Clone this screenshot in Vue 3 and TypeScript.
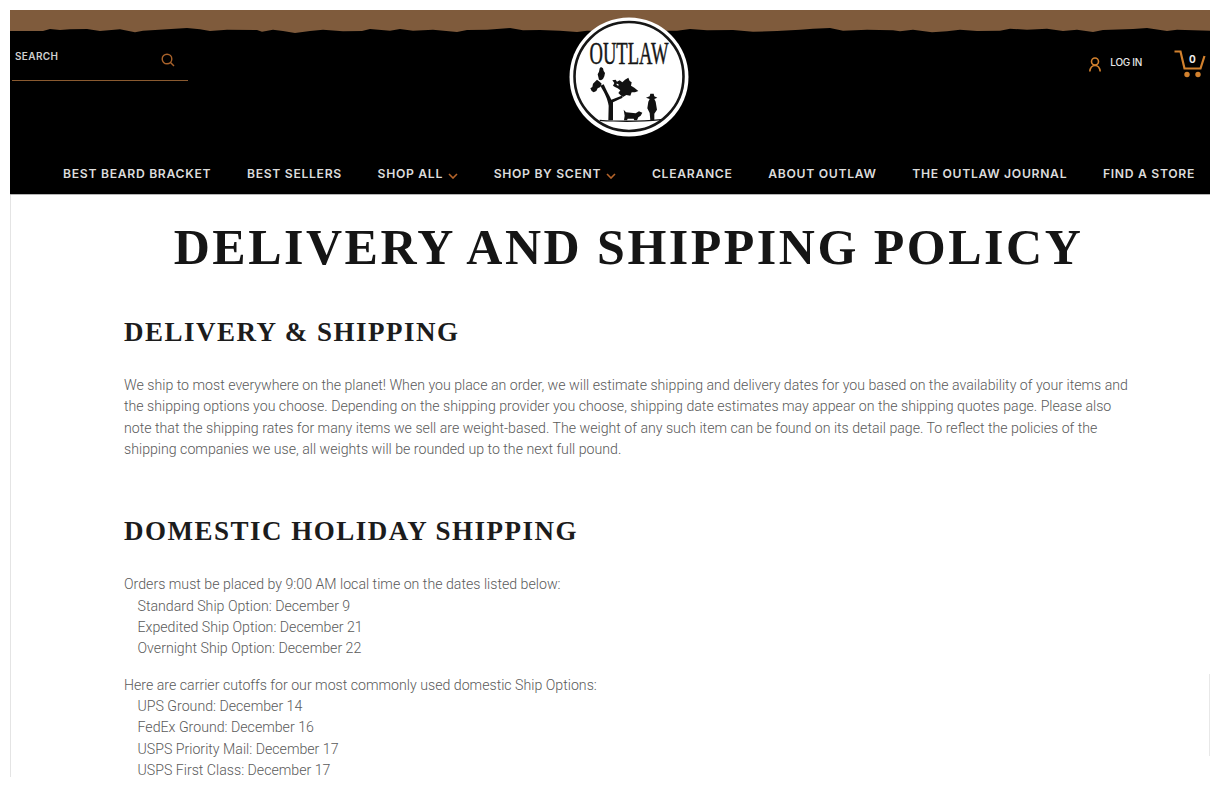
<script setup lang="ts">
const navItems = [
  { label: 'BEST BEARD BRACKET', caret: false },
  { label: 'BEST SELLERS', caret: false },
  { label: 'SHOP ALL', caret: true },
  { label: 'SHOP BY SCENT', caret: true },
  { label: 'CLEARANCE', caret: false },
  { label: 'ABOUT OUTLAW', caret: false },
  { label: 'THE OUTLAW JOURNAL', caret: false },
  { label: 'FIND A STORE', caret: false },
]

const domesticOptions = [
  'Standard Ship Option: December 9',
  'Expedited Ship Option: December 21',
  'Overnight Ship Option: December 22',
]

const carrierCutoffs = [
  'UPS Ground: December 14',
  'FedEx Ground: December 16',
  'USPS Priority Mail: December 17',
  'USPS First Class: December 17',
]

// rough trace of the ripped paper edge: [x, y] in header pixels
const edge: [number, number][] = [
  [0, 21], [33, 21], [40, 19], [50, 20], [60, 19.300], [77, 19], [90, 21], [110, 19.300], [125, 22.300], [133, 20.700],
  [157, 19.300], [177, 18], [190, 19.300], [200, 21], [217, 19.700], [247, 20], [252, 21.700], [263, 19.700], [273, 21],
  [285, 23], [300, 21], [313, 19.700], [333, 21.300], [352, 21], [360, 19], [380, 20.700], [390, 19],
  [403, 20.700], [423, 19.700], [447, 22], [457, 20], [477, 19.700], [500, 18], [513, 20.300], [530, 20], [550, 20.700],
  [567, 22], [577, 20.700], [667, 20.700], [680, 19], [697, 20.300], [723, 20], [743, 21.700], [767, 21], [790, 19.700],
  [803, 18.700], [820, 18], [833, 20.700], [857, 19.700], [883, 20.300], [890, 21.300], [903, 19.700], [922, 22.300],
  [937, 21.300], [950, 19.700], [967, 21], [990, 20.700], [1000, 18.700], [1017, 19.700], [1037, 18.700], [1053, 21],
  [1067, 19.700], [1083, 22], [1093, 20], [1123, 19], [1137, 18], [1157, 21], [1167, 19.700], [1200, 20.700],
]
const tornPath = `M0 0H1200V${edge[edge.length - 1][1]}` +
  [...edge].reverse().map(([x, y]) => `L${x} ${y}`).join('') + 'Z'
</script>

<template>
  <div class="page">
    <header class="site-header">
      <svg class="torn" viewBox="0 0 1200 24" preserveAspectRatio="none">
        <path :d="tornPath" fill="#7f5b3c" />
      </svg>

      <div class="top-row">
        <div class="search">
          <span class="search-label">SEARCH</span>
          <svg class="search-icon" viewBox="0 0 14 14">
            <circle cx="6" cy="6" r="4.800" />
            <path d="M9.500 9.500l3.500 3.500" />
          </svg>
        </div>

        <div class="account">
          <svg class="user-icon" viewBox="0 0 12 15">
            <circle cx="6" cy="4.500" r="3.500" />
            <path d="M.8 14.500c.4-3.600 2.200-6 5.200-6s4.800 2.400 5.200 6" />
          </svg>
          <span class="login">LOG IN</span>
          <div class="cart">
            <svg viewBox="0 0 32 28">
              <path class="cart-line" d="M.5 1.500H6.500L10.500 18.500H26.500L30.500 6" />
              <circle cx="13" cy="24.500" r="2.700" />
              <circle cx="24" cy="24.500" r="2.700" />
            </svg>
            <span class="cart-count">0</span>
          </div>
        </div>
      </div>

      <nav class="main-nav">
        <a v-for="item in navItems" :key="item.label" class="nav-link">
          {{ item.label }}
          <svg v-if="item.caret" class="caret" viewBox="0 0 10 6">
            <path d="M1 1l4 4 4-4" />
          </svg>
        </a>
      </nav>

      <div class="logo">
        <svg viewBox="0 0 120 120">
          <circle cx="60" cy="60" r="59.500" fill="#fff" />
          <circle cx="60" cy="59.500" r="54.500" fill="none" stroke="#161616" stroke-width="2.600" />
          <text transform="translate(60 47) scale(.58 1)" text-anchor="middle" class="logo-text">OUTLAW</text>
          <g transform="translate(16 48) scale(.3333)" fill="#111">
            <!-- tree -->
            <path d="M70 166L71 122C68 102 60 86 46 62L56 58C64 76 72 90 79 104L110 92 113 98 84 112 84 166Z" />
            <path d="M48 6L54 10 56 18 60 24 58 34 54 42 48 46 42 44 40 36 38 28 42 20 44 10Z" />
            <path d="M36 44L44 50 50 56 46 66 38 70 34 78 26 82 20 78 16 70 22 66 24 56 30 50Z" />
            <path d="M82 46L92 44 96 50 104 46 112 52 120 44 130 38 134 48 140 52 138 62 148 68 160 78 150 82 140 82 136 92 124 90 114 96 106 90 100 84 106 76 98 70 90 66 84 62 88 54Z" />
            <path d="M94 56L100 57 101 62 96 61Z" fill="#fff" />
            <!-- dog -->
            <path d="M116 134L123 142 152 145 162 139 172 143 167 152 160 157 156 166 148 166 146 161 128 161 126 166 117 166 119 152Z" />
            <!-- person -->
            <path d="M183 98L194 94 196 86 206 86 208 94 217 98 208 102 212 110 216 134 208 146 208 166 196 166 194 144 187 130 190 110 194 102Z" />
            <!-- ground -->
            <path d="M44 164C100 168 170 168 228 162L228 166C170 172 100 172 44 168Z" />
          </g>
        </svg>
      </div>
    </header>

    <main class="content">
      <h1 class="page-title">DELIVERY AND SHIPPING POLICY</h1>
      <div class="policy">
        <h2>DELIVERY &amp; SHIPPING</h2>
        <p class="intro">
          We ship to most everywhere on the planet! When you place an order, we will estimate shipping and delivery dates for you based on the availability of your items and the shipping options you choose. Depending on the shipping provider you choose, shipping date estimates may appear on the shipping quotes page. Please also note that the shipping rates for many items we sell are weight-based. The weight of any such item can be found on its detail page. To reflect the policies of the shipping companies we use, all weights will be rounded up to the next full pound.
        </p>
        <h2 class="second">DOMESTIC HOLIDAY SHIPPING</h2>
        <p class="lead">Orders must be placed by 9:00 AM local time on the dates listed below:</p>
        <ul>
          <li v-for="line in domesticOptions" :key="line">{{ line }}</li>
        </ul>
        <p class="next">Here are carrier cutoffs for our most commonly used domestic Ship Options:</p>
        <ul>
          <li v-for="line in carrierCutoffs" :key="line">{{ line }}</li>
        </ul>
      </div>
    </main>
    <div class="scroll-mark"></div>
  </div>
</template>

<style>
html,
body {
  margin: 0;
  background: #fff;
}
</style>

<style scoped>
.page {
  position: relative;
  box-sizing: border-box;
  width: 1200px;
  height: 767px;
  margin: 10px;
  display: flex;
  flex-direction: column;
  overflow: hidden;
  background: #fff;
  font-family: Roboto, "Liberation Sans", sans-serif;
}

.site-header {
  position: relative;
  height: 184px;
  flex: none;
  display: flex;
  flex-direction: column;
  background: #000;
  color: #e8e8e8;
  border-bottom: 1px solid #b4b4b4;
}

.torn {
  display: block;
  width: 100%;
  height: 24px;
  flex: none;
}

.top-row {
  flex: 1;
  display: flex;
  justify-content: space-between;
  align-items: flex-start;
  padding: 8px 4px 0 2px;
}

.search {
  box-sizing: border-box;
  width: 176px;
  height: 39px;
  padding: 7px 13px 0 3px;
  display: flex;
  justify-content: space-between;
  align-items: flex-start;
  border-bottom: 1px solid #8a5a30;
}

.search-label {
  font-family: Inter, "Liberation Sans", sans-serif;
  font-size: 10px;
  font-weight: 600;
  letter-spacing: 0.35px;
  color: #cfcfcf;
  line-height: 14px;
}

.search-icon {
  width: 14px;
  height: 14px;
  margin-top: 4px;
  fill: none;
  stroke: #a9622a;
  stroke-width: 1.400;
}

.account {
  display: flex;
  align-items: center;
  margin-top: 8px;
}

.user-icon {
  width: 12px;
  height: 15px;
  margin-left: 1px;
  fill: none;
  stroke: #d2812e;
  stroke-width: 1.600;
}

.login {
  margin: 0 0 4px 9px;
  font-family: Inter, "Liberation Sans", sans-serif;
  font-size: 10px;
  font-weight: 500;
  letter-spacing: -0.3px;
  color: #e6e6e6;
}

.cart {
  position: relative;
  width: 32px;
  height: 28px;
  margin-left: 32px;
}

.cart svg {
  display: block;
  width: 32px;
  height: 28px;
  fill: #d2812e;
}

.cart .cart-line {
  fill: none;
  stroke: #d2812e;
  stroke-width: 2.200;
}

.cart-count {
  position: absolute;
  top: 3px;
  left: 15px;
  font-family: Inter, "Liberation Sans", sans-serif;
  font-size: 10px;
  font-weight: 700;
  color: #ececec;
}

.main-nav {
  display: flex;
  justify-content: flex-end;
  gap: 35.700px;
  padding: 0 15px 12px 0;
}

.nav-link {
  display: flex;
  align-items: center;
  gap: 5px;
  font-family: Inter, "Liberation Sans", sans-serif;
  font-size: 12.200px;
  font-weight: 600;
  letter-spacing: 0.68px;
  line-height: 16px;
  color: #dcdcdc;
  white-space: nowrap;
}

.caret {
  width: 10px;
  height: 6px;
  margin-top: 3px;
  fill: none;
  stroke: #b5642a;
  stroke-width: 1.600;
}

.logo {
  position: absolute;
  top: 7px;
  left: 559px;
  width: 120px;
  height: 120px;
}

.logo svg {
  display: block;
  width: 120px;
  height: 120px;
}

.logo-text {
  font-family: "Liberation Serif", serif;
  font-size: 32px;
  fill: #161616;
  stroke: #161616;
  stroke-width: 0.5px;
}

.content {
  flex: 1;
  padding: 27px 0 0;
  border-left: 1px solid #e4e4e4;
}

.page-title {
  margin: 0;
  padding-left: 36px;
  text-align: center;
  font-family: "Liberation Serif", serif;
  font-size: 50px;
  font-weight: 700;
  line-height: 50px;
  letter-spacing: 2.500px;
  color: #151515;
}

.policy {
  padding: 0 70px 0 113px;
}

h2 {
  margin: 45px 0 0;
  font-family: "Liberation Serif", serif;
  font-size: 27px;
  font-weight: 700;
  line-height: 30px;
  letter-spacing: 1.500px;
  color: #1c1c1c;
}

h2.second {
  margin-top: 56px;
}

p {
  margin: 0;
  font-size: 14.170px;
  font-weight: 300;
  line-height: 21.330px;
  color: #5a5a5a;
}

p.intro,
p.lead {
  margin-top: 28px;
}

p.next {
  margin-top: 15px;
}

ul {
  margin: 0;
  padding: 0 0 0 13.500px;
  list-style: none;
}

li {
  font-size: 14.170px;
  font-weight: 300;
  line-height: 21.330px;
  color: #5a5a5a;
}

.scroll-mark {
  position: absolute;
  right: 0;
  top: 664px;
  width: 1px;
  height: 82px;
  background: #e8e8e8;
}
</style>
